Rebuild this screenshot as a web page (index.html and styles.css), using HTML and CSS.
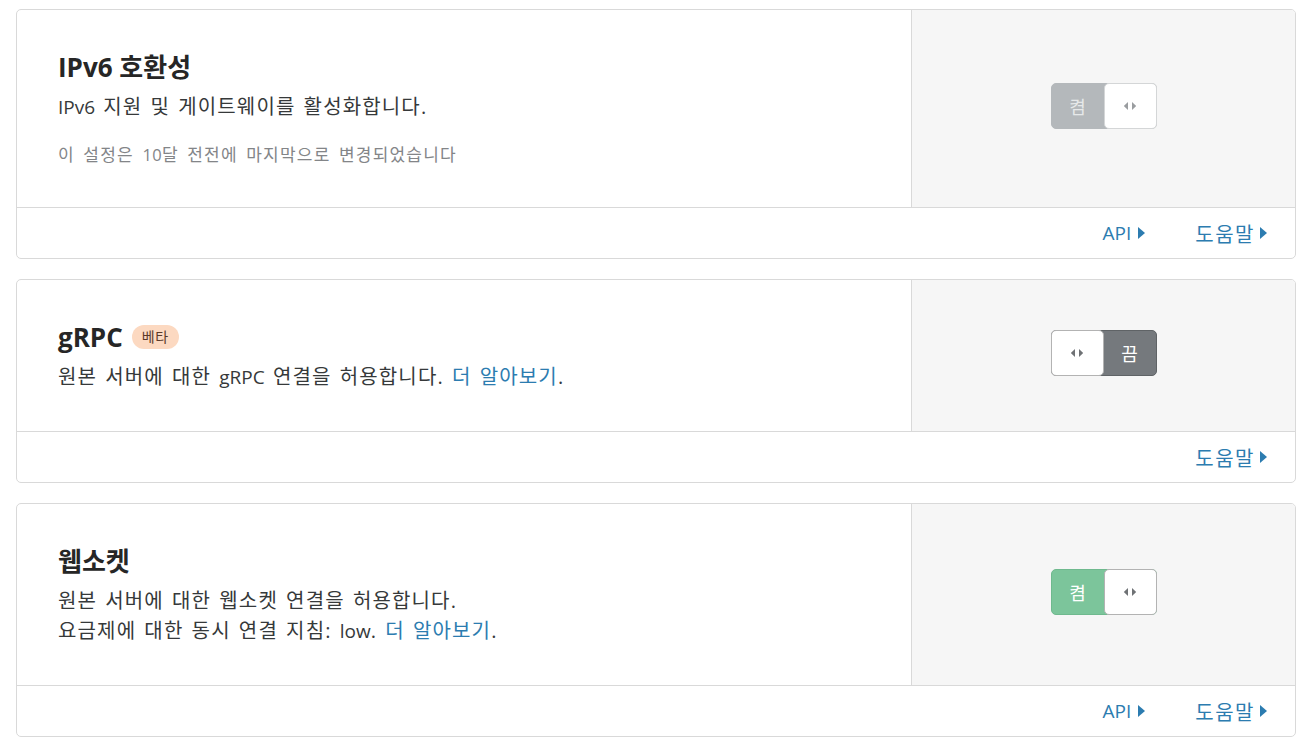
FILE: index.html
```html
<!DOCTYPE html>
<html lang="ko">
<head>
<meta charset="utf-8">
<link rel="stylesheet" href="styles.css">
</head>
<body>
<div class="page">
  <section class="card">
    <div class="card-main">
      <div class="card-body">
        <h3 class="title">IPv6 호환성</h3>
        <p class="desc"><span class="en">IPv6</span> 지원 및 게이트웨이를 활성화합니다.</p>
        <p class="meta">이 설정은 <span class="en">10</span>달 전전에 마지막으로 변경되었습니다</p>
      </div>
      <div class="card-control">
        <div class="toggle toggle-on toggle-disabled">
          <span class="toggle-label">켬</span>
          <span class="knob"><svg width="14" height="10" viewBox="0 0 14 10"><path d="M5 1 L0.8 5 L5 9 Z M9 1 L13.2 5 L9 9 Z" fill="#9a9da0"/></svg></span>
        </div>
      </div>
    </div>
    <div class="card-footer">
      <a class="flink flink-en">API<svg class="caret" width="7" height="12" viewBox="0 0 7 12"><path d="M0 0 L7 6 L0 12 Z" fill="#2c7cb0"/></svg></a>
      <a class="flink">도움말<svg class="caret" width="7" height="12" viewBox="0 0 7 12"><path d="M0 0 L7 6 L0 12 Z" fill="#2c7cb0"/></svg></a>
    </div>
  </section>

  <section class="card">
    <div class="card-main">
      <div class="card-body">
        <h3 class="title">gRPC <span class="badge">베타</span></h3>
        <p class="desc">원본 서버에 대한 <span class="en">gRPC</span> 연결을 허용합니다. <a class="link">더 알아보기</a>.</p>
      </div>
      <div class="card-control">
        <div class="toggle toggle-off">
          <span class="knob"><svg width="14" height="10" viewBox="0 0 14 10"><path d="M5 1 L0.8 5 L5 9 Z M9 1 L13.2 5 L9 9 Z" fill="#6f7275"/></svg></span>
          <span class="toggle-label">끔</span>
        </div>
      </div>
    </div>
    <div class="card-footer">
      <a class="flink">도움말<svg class="caret" width="7" height="12" viewBox="0 0 7 12"><path d="M0 0 L7 6 L0 12 Z" fill="#2c7cb0"/></svg></a>
    </div>
  </section>

  <section class="card">
    <div class="card-main">
      <div class="card-body">
        <h3 class="title">웹소켓</h3>
        <p class="desc">원본 서버에 대한 웹소켓 연결을 허용합니다.<br>요금제에 대한 동시 연결 지침: <span class="en">low</span>. <a class="link">더 알아보기</a>.</p>
      </div>
      <div class="card-control">
        <div class="toggle toggle-on toggle-green">
          <span class="toggle-label">켬</span>
          <span class="knob"><svg width="14" height="10" viewBox="0 0 14 10"><path d="M5 1 L0.8 5 L5 9 Z M9 1 L13.2 5 L9 9 Z" fill="#6f7275"/></svg></span>
        </div>
      </div>
    </div>
    <div class="card-footer">
      <a class="flink flink-en">API<svg class="caret" width="7" height="12" viewBox="0 0 7 12"><path d="M0 0 L7 6 L0 12 Z" fill="#2c7cb0"/></svg></a>
      <a class="flink">도움말<svg class="caret" width="7" height="12" viewBox="0 0 7 12"><path d="M0 0 L7 6 L0 12 Z" fill="#2c7cb0"/></svg></a>
    </div>
  </section>
</div>
</body>
</html>
```

FILE: styles.css
```css
* { box-sizing: border-box; }
html, body { margin: 0; padding: 0; background: #fff; }
body {
  font-family: "Open Sans", "Noto Sans CJK KR", sans-serif;
  color: #36393a;
}
.page {
  padding: 9px 14px 0 16px;
  display: flex;
  flex-direction: column;
  gap: 20px;
}
.card {
  border: 1px solid #d9d9d9;
  border-radius: 5px;
  background: #fff;
  overflow: hidden;
}
.card-main {
  display: flex;
  border-bottom: 1px solid #d9d9d9;
}
.card-body {
  flex: 1;
  padding: 39px 41px;
  display: flex;
  flex-direction: column;
  justify-content: center;
}
.title {
  margin: 0;
  font-size: 26px;
  font-weight: 700;
  color: #262626;
  line-height: 36px;
  display: flex;
  align-items: center;
  gap: 9px;
}
.badge {
  display: inline-block;
  background: #fcd9c1;
  color: #5a3a2a;
  font-size: 14px;
  font-weight: 400;
  letter-spacing: 0.5px;
  line-height: 24px;
  height: 24px;
  padding: 0 10px;
  border-radius: 12px;
}
.desc {
  margin: 7px 0 0;
  font-size: 20px;
  line-height: 30px;
  letter-spacing: 1.15px;
  word-spacing: 1.8px;
}
.en {
  font-size: 19px;
  letter-spacing: 0;
}
.meta {
  margin: 20px 0 0;
  font-size: 17px;
  line-height: 26px;
  letter-spacing: 1.2px;
  word-spacing: 2.9px;
  color: #838588;
}
.meta .en { font-size: 16.5px; letter-spacing: 0.3px; }
.link { color: #2c7cb0; text-decoration: none; }
.card-control {
  width: 384px;
  flex: none;
  background: #f6f6f6;
  border-left: 1px solid #d9d9d9;
  display: flex;
  align-items: center;
  justify-content: center;
  padding-bottom: 5px;
}
.toggle {
  width: 106px;
  height: 46px;
  border-radius: 5px;
  display: flex;
  align-items: stretch;
  font-size: 18px;
  color: #fff;
}
.toggle-label {
  flex: 1;
  display: flex;
  align-items: center;
  justify-content: center;
}
.knob {
  width: 53px;
  background: #fff;
  border: 1px solid #bdbdbd;
  border-radius: 5px;
  display: flex;
  align-items: center;
  justify-content: center;
}
.toggle-disabled { background: #b4b8bb; border: 1px solid #b4b8bb; }
.toggle-disabled .toggle-label { color: #e6e8e9; }
.toggle-disabled .knob { border-color: #d4d6d7; }
.toggle-off { background: #75797d; border: 1px solid #5f6366; }
.toggle-off .knob { border-color: #b3b3b3; margin: -1px 0 -1px -1px; }
.toggle-green { background: #7cc59b; border: 1px solid #6fb98e; }
.toggle-green .knob { border-color: #b3b3b3; }
.toggle-on .knob { margin: -1px -1px -1px 0; }
.card-footer {
  height: 50px;
  display: flex;
  justify-content: flex-end;
  align-items: center;
  gap: 50px;
  padding-right: 28px;
}
.flink {
  color: #2c7cb0;
  font-size: 20px;
  letter-spacing: 1.5px;
  display: flex;
  align-items: center;
  gap: 5px;
  text-decoration: none;
}
.flink-en {
  font-size: 19px;
  letter-spacing: 0;
  gap: 7px;
}
.caret { display: block; }
```
